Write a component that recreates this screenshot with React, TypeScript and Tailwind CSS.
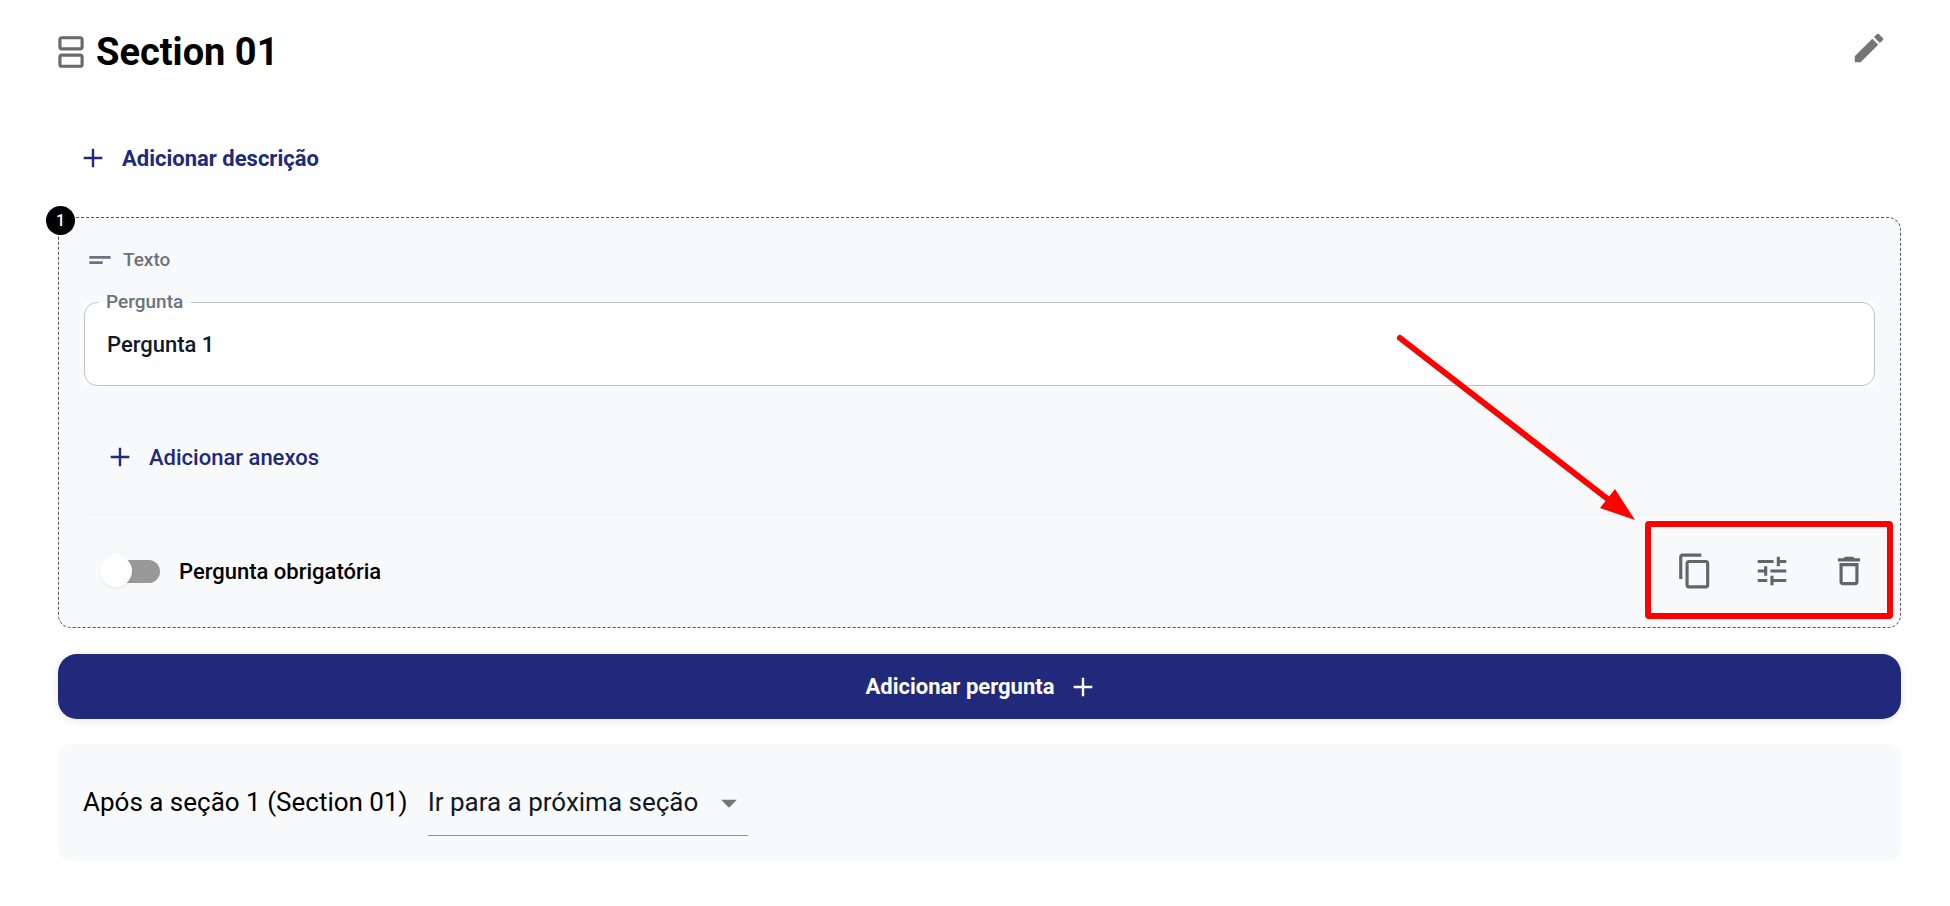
import React, { useState } from "react";

const ICONS = {
  splitscreen:
    "M18 4v5H6V4h12m0-2H6c-1.1 0-2 .9-2 2v5c0 1.1.9 2 2 2h12c1.1 0 2-.9 2-2V4c0-1.1-.9-2-2-2zm0 13v5H6v-5h12m0-2H6c-1.1 0-2 .9-2 2v5c0 1.1.9 2 2 2h12c1.1 0 2-.9 2-2v-5c0-1.1-.9-2-2-2z",
  edit: "M3 17.25V21h3.75L17.81 9.94l-3.75-3.75L3 17.25zM20.71 7.04c.39-.39.39-1.02 0-1.41l-2.34-2.34c-.39-.39-1.02-.39-1.41 0l-1.83 1.83 3.75 3.75 1.83-1.83z",
  add: "M19 12.9h-6.1V19h-1.8v-6.1H5v-1.8h6.1V5h1.8v6.1H19v1.8z",
  shortText: "M4 9h16v2H4V9zm0 4h10v2H4v-2z",
  copy: "M16 1H4c-1.1 0-2 .9-2 2v14h2V3h12V1zm3 4H8c-1.1 0-2 .9-2 2v14c0 1.1.9 2 2 2h11c1.1 0 2-.9 2-2V7c0-1.1-.9-2-2-2zm0 16H8V7h11v14z",
  tune: "M3 17v2h6v-2H3zM3 5v2h10V5H3zm10 16v-2h8v-2h-8v-2h-2v6h2zM7 9v2H3v2h4v2h2V9H7zm14 4v-2H11v2h10zm-6-4h2V7h4V5h-4V3h-2v6z",
  trash:
    "M16 9v10H8V9h8m-1.5-6h-5l-1 1H5v2h14V4h-3.5l-1-1zM18 7H6v12c0 1.1.9 2 2 2h8c1.1 0 2-.9 2-2V7z",
  dropDown: "M7 10l5 5 5-5z",
};

function Icon({ name, className }: { name: keyof typeof ICONS; className: string }) {
  return (
    <svg viewBox="0 0 24 24" fill="currentColor" aria-hidden="true" className={className}>
      <path d={ICONS[name]} />
    </svg>
  );
}

function QuestionCard() {
  const [question, setQuestion] = useState("Pergunta 1");
  const [required, setRequired] = useState(false);

  return (
    <section className="relative rounded-[13px] border border-dashed border-[#55585c] bg-[#f8f9fb] px-[25px] pt-[26px] pb-[31px]">
      <span className="absolute -top-3 -left-[13px] flex size-[29px] items-center justify-center rounded-full bg-black text-base font-medium text-white">
        1
      </span>

      <div className="flex h-8 items-center gap-[7px] text-[#6b7280]">
        <Icon name="shortText" className="size-8" />
        <span className="text-[19px] font-medium">Texto</span>
      </div>

      <div className="relative mt-[26px] bg-white">
        <label
          htmlFor="question"
          className="absolute -top-3 left-[14px] bg-[linear-gradient(#f8f9fb_50%,#ffffff_50%)] px-2 text-[19px] leading-6 font-medium text-[#6b7280]"
        >
          Pergunta
        </label>
        <input
          id="question"
          value={question}
          onChange={(e) => setQuestion(e.target.value)}
          className="block h-[84px] w-full rounded-[13px] border border-[#c0c1c3] bg-transparent px-[22px] text-[22px] font-medium text-[#111827] outline-none"
        />
      </div>

      <button
        type="button"
        className="mt-[55px] ml-5 flex h-8 items-center gap-[13px] text-[22px] font-medium text-[#20297a]"
      >
        <Icon name="add" className="size-8" />
        Adicionar anexos
      </button>

      <hr className="mt-[41px] border-[#f0f1f4]" />

      <div className="mt-[31px] flex items-center justify-between">
        <label className="ml-[22px] flex items-center gap-[19px] text-[22px] font-medium text-black">
          <input
            type="checkbox"
            role="switch"
            checked={required}
            onChange={(e) => setRequired(e.target.checked)}
            className="relative h-[23px] w-[54px] appearance-none rounded-full bg-[#999999] before:absolute before:-top-[5px] before:-left-[6px] before:size-8 before:rounded-full before:bg-white before:shadow-[0_2px_3px_rgba(0,0,0,0.06)] checked:before:left-[28px]"
          />
          Pergunta obrigatória
        </label>

        <div className="relative mr-[7px] flex h-[50px] items-center gap-[39px] text-[#646566]">
          <button type="button" aria-label="Duplicar pergunta">
            <Icon name="copy" className="size-[38px]" />
          </button>
          <button type="button" aria-label="Configurar pergunta">
            <Icon name="tune" className="size-[38px]" />
          </button>
          <button type="button" aria-label="Excluir pergunta">
            <Icon name="trash" className="size-[38px]" />
          </button>
          <div className="pointer-events-none absolute -top-[25px] -right-[25px] -bottom-[23px] -left-[31px] rounded-[4px] border-[6px] border-[#ff0000]" />
          <svg
            viewBox="0 0 242 190"
            aria-hidden="true"
            className="pointer-events-none absolute right-[231px] bottom-[74px] h-[190px] w-[242px]"
          >
            <path d="M5 6 214 168" stroke="#ff0000" strokeWidth="6" strokeLinecap="round" />
            <path d="M240 188 220 157 205 176Z" fill="#ff0000" />
          </svg>
        </div>
      </div>
    </section>
  );
}

export default function App() {
  return (
    <main className="bg-white pt-[29px] pr-[49px] pb-11 pl-[58px] font-[Roboto,'Liberation_Sans',sans-serif]">
      <header className="flex items-center justify-between">
        <div className="-ml-[6px] flex items-center gap-[6px]">
          <Icon name="splitscreen" className="size-[38px] text-[#6a6a6a]" />
          <h1 className="text-[38px] leading-[46px] font-bold text-black">Section 01</h1>
        </div>
        <button type="button" aria-label="Editar seção" className="mr-[13px] mb-2 text-[#757575]">
          <Icon name="edit" className="size-[38px]" />
        </button>
      </header>

      <button
        type="button"
        className="mt-[67px] mb-[43px] ml-[19px] flex h-8 items-center gap-[13px] text-[22px] font-bold text-[#20297a]"
      >
        <Icon name="add" className="size-8" />
        Adicionar descrição
      </button>

      <QuestionCard />

      <button
        type="button"
        className="mt-[26px] flex h-[65px] w-full items-center justify-center gap-[13px] rounded-[19px] bg-[#20297a] pl-[6px] text-[22px] font-bold text-white shadow-[0_2px_8px_rgba(0,0,0,0.1)]"
      >
        Adicionar pergunta
        <Icon name="add" className="size-8" />
      </button>

      <div className="mt-[25px] flex h-[117px] items-center gap-5 rounded-[13px] bg-[#f8f9fb] px-[25px] text-[26px]">
        <label htmlFor="next-section" className="text-black">
          Após a seção 1 (Section 01)
        </label>
        <div className="relative">
          <select
            id="next-section"
            className="block h-[66px] w-[320px] appearance-none border-b border-[#8f9092] bg-transparent pr-[40px] text-[#111827] outline-none"
          >
            <option>Ir para a próxima seção</option>
          </select>
          <Icon
            name="dropDown"
            className="pointer-events-none absolute top-[14px] right-0 size-[38px] text-[#757575]"
          />
        </div>
      </div>
    </main>
  );
}
